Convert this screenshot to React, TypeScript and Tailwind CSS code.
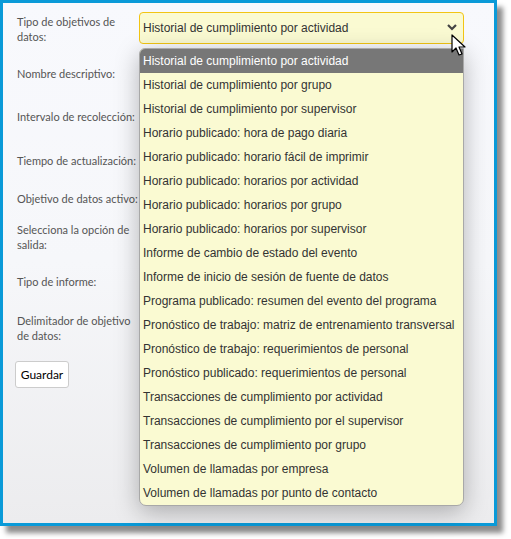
import React from "react";

const reportTypes = [
  "Historial de cumplimiento por actividad",
  "Historial de cumplimiento por grupo",
  "Historial de cumplimiento por supervisor",
  "Horario publicado: hora de pago diaria",
  "Horario publicado: horario fácil de imprimir",
  "Horario publicado: horarios por actividad",
  "Horario publicado: horarios por grupo",
  "Horario publicado: horarios por supervisor",
  "Informe de cambio de estado del evento",
  "Informe de inicio de sesión de fuente de datos",
  "Programa publicado: resumen del evento del programa",
  "Pronóstico de trabajo: matriz de entrenamiento transversal",
  "Pronóstico de trabajo: requerimientos de personal",
  "Pronóstico publicado: requerimientos de personal",
  "Transacciones de cumplimiento por actividad",
  "Transacciones de cumplimiento por el supervisor",
  "Transacciones de cumplimiento por grupo",
  "Volumen de llamadas por empresa",
  "Volumen de llamadas por punto de contacto",
];

// label + row height so the labels line up with their (hidden) controls
const fields: { label: string; h: string; pt: string }[] = [
  { label: "Tipo de objetivos de datos:", h: "h-[54px]", pt: "pt-[2px]" },
  { label: "Nombre descriptivo:", h: "h-[43px]", pt: "pt-0" },
  { label: "Intervalo de recolección:", h: "h-[44px]", pt: "pt-0" },
  { label: "Tiempo de actualización:", h: "h-[38px]", pt: "pt-0" },
  { label: "Objetivo de datos activo:", h: "h-[31px]", pt: "pt-0" },
  { label: "Selecciona la opción de salida:", h: "h-[52px]", pt: "pt-0" },
  { label: "Tipo de informe:", h: "h-[39px]", pt: "pt-0" },
  { label: "Delimitador de objetivo de datos:", h: "h-[46px]", pt: "pt-0" },
];

function Cursor() {
  return (
    <svg width="16" height="24" viewBox="0 0 16 24" className="absolute left-[448px] top-[31px]">
      <path
        d="M1 1 L1 18 L5 14 L8 21 L11 20 L8 13 L14 13 Z"
        fill="#fff"
        stroke="#000"
        strokeWidth="1.2"
        strokeLinejoin="round"
      />
    </svg>
  );
}

export default function App() {
  return (
    <div className="w-[511px] h-[539px] bg-white">
      <div className="relative w-[497px] h-[526px] border-[3px] border-[#0a9ad8] bg-gradient-to-b from-[#f8f9fd] via-[#f6f7fa] to-[#ececee] shadow-[6px_7px_5px_rgba(0,0,0,0.45)]">
        <div className="pt-[9px] pl-[14px] font-['Lato',sans-serif] text-[11px] leading-[15px] text-[#555]">
          {fields.map((f, i) => (
            <div key={i} className={`flex ${f.h}`}>
              <div className={`w-[122px] shrink-0 ${f.pt}`}>{f.label}</div>
              {i === 0 && (
                <div className="relative w-[325px] h-[32px] rounded-[4px] border border-[#f2c514] bg-[#fafad2] flex items-center pl-[3px] font-['Liberation_Sans',Arial,sans-serif] text-[12px] text-[#333]">
                  Historial de cumplimiento por actividad
                  <svg width="10" height="7" viewBox="0 0 10 7" className="absolute right-[6px] top-[11px]">
                    <polyline points="1,1 5,5 9,1" fill="none" stroke="#444" strokeWidth="2.2" />
                  </svg>
                </div>
              )}
            </div>
          ))}
          <button className="mt-[2px] -ml-[2px] h-[27px] w-[54px] rounded-[3px] border border-[#ccc] bg-white font-['Lato',sans-serif] text-[12px] text-black">
            Guardar
          </button>
        </div>

        <ul className="absolute left-[136px] top-[45px] w-[325px] rounded-b-[7px] rounded-tl-[6px] border border-[#a8a8a8] bg-[#fafad2] overflow-hidden shadow-[0_6px_24px_rgba(0,0,0,0.28)] font-['Liberation_Sans',Arial,sans-serif] text-[12px] text-[#333]">
          {reportTypes.map((t, i) => (
            <li
              key={t}
              className={`h-[24px] leading-[24px] pl-[3px] whitespace-nowrap ${i === 0 ? "bg-[#777777] text-white" : ""}`}
            >
              {t}
            </li>
          ))}
        </ul>

        <Cursor />
      </div>
    </div>
  );
}
